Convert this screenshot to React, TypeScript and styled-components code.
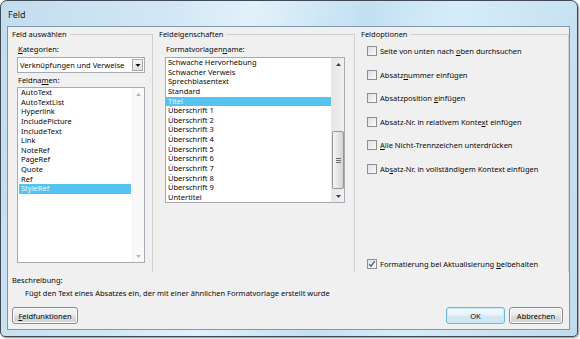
import React from 'react';
import styled, { createGlobalStyle } from 'styled-components';

const Global = createGlobalStyle`
  html, body { margin: 0; padding: 0; background: #ffffff; }
  body {
    font-family: "Noto Sans", "Open Sans", sans-serif;
    font-size: 7.5px;
    color: #080808;
  }
  #root { width: 580px; height: 339px; }
`;

const Window = styled.div`
  width: 578px;
  height: 337px;
  box-sizing: border-box;
  border: 1px solid #3f4a55;
  border-radius: 7px 7px 5px 5px;
  background:
    linear-gradient(100deg, #c3dcee 0%, #d3e8f6 28%, #e2f1fa 40%, #c2e0f2 58%, #d6edf9 72%, #bfdcef 100%);
  display: flex;
  flex-direction: column;
  box-shadow: 1px 1px 2px rgba(0, 0, 0, 0.45);
  overflow: hidden;
`;

const TitleBar = styled.div`
  height: 25px;
  flex: none;
  display: flex;
  align-items: center;
  padding-left: 7px;
  padding-top: 2px;
  box-sizing: border-box;
  font-size: 9px;
  color: #1b1b1b;
`;

const Client = styled.div`
  flex: 1;
  margin: 0 7px 6px 6px;
  border: 1px solid #7d97ad;
  background: #f0f0f0;
  display: flex;
  flex-direction: column;
`;

const GroupsRow = styled.div`
  display: flex;
  height: 244px;
  padding-top: 1px;
`;

const Group = styled.section<{ $w: number; $pl: number }>`
  width: ${(p) => p.$w}px;
  flex: none;
  display: flex;
  flex-direction: column;
  padding-left: ${(p) => p.$pl}px;
  box-sizing: border-box;
`;

const GroupHeader = styled.div`
  display: flex;
  height: 12px;
  line-height: 12px;
  flex: none;
`;

const GroupTitle = styled.span`
  padding-right: 3px;
  white-space: nowrap;
`;

const HeaderLine = styled.div`
  flex: 1;
  margin-top: 6px;
  border-top: 1px solid #d0d0d0;
  border-right: 1px solid #d0d0d0;
`;

const GroupBody = styled.div<{ $pl: number }>`
  flex: 1;
  display: flex;
  flex-direction: column;
  padding-left: ${(p) => p.$pl}px;
  border-right: 1px solid #d0d0d0;
`;

const FieldLabel = styled.div<{ $mt: number }>`
  line-height: 12px;
  margin-top: ${(p) => p.$mt}px;
  padding-left: 1px;
`;

const U = styled.span`
  text-decoration: underline;
  text-underline-offset: 1px;
`;

const Select = styled.div`
  margin-top: 2px;
  width: 128px;
  height: 16px;
  box-sizing: border-box;
  border: 1px solid #a4abb4;
  background: #ffffff;
  display: flex;
  align-items: center;
  padding-left: 2px;
  padding-right: 1px;
`;

const SelectText = styled.span`
  flex: 1;
  white-space: nowrap;
`;

const SelectButton = styled.div`
  width: 11px;
  height: 12px;
  box-sizing: border-box;
  border: 1px solid #a7a7a7;
  background: linear-gradient(#f6f6f6, #dedede);
  display: flex;
  align-items: center;
  justify-content: center;
`;

const ListBox = styled.div<{ $w: number; $h: number; $mt: number }>`
  width: ${(p) => p.$w}px;
  height: ${(p) => p.$h}px;
  box-sizing: border-box;
  border: 1px solid #a4abb4;
  background: #ffffff;
  display: flex;
  margin-top: ${(p) => p.$mt}px;
`;

const Rows = styled.div<{ $pad: number }>`
  flex: 1;
  padding: 0 ${(p) => p.$pad}px;
  overflow: hidden;
`;

const Row = styled.div<{ $sel?: boolean }>`
  height: 9.65px;
  line-height: 9.65px;
  padding-left: 2px;
  white-space: nowrap;
  background: ${(p) => (p.$sel ? '#56c2f0' : 'transparent')};
  color: ${(p) => (p.$sel ? '#eaf7ff' : '#080808')};
`;

const ScrollBar = styled.div<{ $disabled?: boolean }>`
  width: ${(p) => (p.$disabled ? 11 : 12)}px;
  flex: none;
  display: flex;
  flex-direction: column;
  background: ${(p) => (p.$disabled ? '#f9f9f9' : 'linear-gradient(90deg, #e6e6e6, #f1f1f1)')};
  border-left: 1px solid ${(p) => (p.$disabled ? '#f0f0f0' : '#e8e8e8')};
`;

const ScrollArrow = styled.div`
  height: 12px;
  flex: none;
  display: flex;
  align-items: center;
  justify-content: center;
`;

const ScrollTrack = styled.div`
  flex: 1;
  display: flex;
  flex-direction: column;
  padding-top: 61px;
`;

const Thumb = styled.div`
  height: 58px;
  box-sizing: border-box;
  border: 1px solid #979797;
  border-radius: 2px;
  background: linear-gradient(90deg, #f4f4f4, #e2e2e2 60%, #d3d3d3);
  display: flex;
  align-items: center;
  justify-content: center;
`;

const Options = styled.div`
  flex: 1;
  display: flex;
  flex-direction: column;
  padding-top: 5px;
  padding-bottom: 2px;
  gap: 11.5px;
`;

const OptionRow = styled.div<{ $bottom?: boolean }>`
  display: flex;
  align-items: center;
  height: 12px;
  line-height: 12px;
  white-space: nowrap;
  margin-top: ${(p) => (p.$bottom ? 'auto' : '0')};
`;

const Box = styled.div`
  width: 10px;
  height: 10px;
  box-sizing: border-box;
  border: 1px solid #8d8f91;
  background: linear-gradient(135deg, #dedede, #fbfbfb);
  margin-right: 3px;
  flex: none;
  display: flex;
  align-items: center;
  justify-content: center;
`;

const Description = styled.div`
  padding-left: 4px;
  margin-top: 2px;
  line-height: 12px;
`;

const DescText = styled.div`
  padding-left: 17px;
  margin-top: 1px;
  line-height: 12px;
  white-space: nowrap;
`;

const Footer = styled.div`
  display: flex;
  align-items: center;
  margin-top: 8px;
  padding: 0 6px 0 4px;
`;

const Button = styled.div<{ $w: number; $default?: boolean }>`
  width: ${(p) => p.$w}px;
  height: 17px;
  box-sizing: border-box;
  border: 1px solid ${(p) => (p.$default ? '#6fb8d6' : '#8b8b8b')};
  border-radius: 3px;
  background: ${(p) =>
    p.$default
      ? 'linear-gradient(#f4fafd 0%, #e6f2f9 48%, #d6e9f4 52%, #cbe3f1 100%)'
      : 'linear-gradient(#f3f3f3 0%, #ebebeb 48%, #dddddd 52%, #cfcfcf 100%)'};
  box-shadow: inset 0 0 0 1px ${(p) => (p.$default ? '#c8ecf8' : '#fbfbfb')};
  display: flex;
  align-items: center;
  justify-content: center;
  white-space: nowrap;
`;

const Spacer = styled.div`
  flex: 1;
`;

const ButtonGap = styled.div`
  width: 4px;
`;

const UpArrow = ({ c }: { c: string }) => (
  <svg width="5" height="3" viewBox="0 0 5 3">
    <path d="M0 3 L2.5 0 L5 3 Z" fill={c} />
  </svg>
);
const DownArrow = ({ c, w = 5 }: { c: string; w?: number }) => (
  <svg width={w} height="3" viewBox="0 0 5 3">
    <path d="M0 0 L5 0 L2.5 3 Z" fill={c} />
  </svg>
);

const Grip = () => (
  <svg width="5" height="5" viewBox="0 0 5 5">
    <path d="M0 0.5 H5 M0 2.5 H5 M0 4.5 H5" stroke="#6a6a6a" strokeWidth="1" />
  </svg>
);

const Check = () => (
  <svg width="8" height="8" viewBox="0 0 8 8">
    <path d="M1.2 4.2 L3.1 6.2 L6.8 1.2" stroke="#4b5f93" strokeWidth="1.4" fill="none" />
  </svg>
);

const fieldNames = [
  'AutoText',
  'AutoTextList',
  'Hyperlink',
  'IncludePicture',
  'IncludeText',
  'Link',
  'NoteRef',
  'PageRef',
  'Quote',
  'Ref',
  'StyleRef',
];

const styles = [
  'Schwache Hervorhebung',
  'Schwacher Verweis',
  'Sprechblasentext',
  'Standard',
  'Titel',
  'Überschrift 1',
  'Überschrift 2',
  'Überschrift 3',
  'Überschrift 4',
  'Überschrift 5',
  'Überschrift 6',
  'Überschrift 7',
  'Überschrift 8',
  'Überschrift 9',
  'Untertitel',
];

type Opt = { pre: string; key: string; post: string; checked?: boolean; bottom?: boolean };
const options: Opt[] = [
  { pre: 'Seite von unten nach ', key: 'o', post: 'ben durchsuchen' },
  { pre: 'Absatz', key: 'n', post: 'ummer einfügen' },
  { pre: 'Absatzposition ', key: 'e', post: 'infügen' },
  { pre: 'Absatz-Nr. in relativem Konte', key: 'x', post: 't einfügen' },
  { pre: '', key: 'A', post: 'lle Nicht-Trennzeichen unterdrücken' },
  { pre: 'Ab', key: 's', post: 'atz-Nr. in vollständigem Kontext einfügen' },
  { pre: 'Formatierung bei Aktualisierung ', key: 'b', post: 'eibehalten', checked: true, bottom: true },
];

export default function App() {
  return (
    <>
      <Global />
      <Window>
        <TitleBar>Feld</TitleBar>
        <Client>
          <GroupsRow>
            <Group $w={145} $pl={4}>
              <GroupHeader>
                <GroupTitle>Feld auswählen</GroupTitle>
                <HeaderLine />
              </GroupHeader>
              <GroupBody $pl={5}>
                <FieldLabel $mt={3}>
                  <U>K</U>ategorien:
                </FieldLabel>
                <Select>
                  <SelectText>Verknüpfungen und Verweise</SelectText>
                  <SelectButton>
                    <DownArrow c="#111" w={6} />
                  </SelectButton>
                </Select>
                <FieldLabel $mt={1}>
                  Feldna<U>m</U>en:
                </FieldLabel>
                <ListBox $w={128} $h={176} $mt={1}>
                  <Rows $pad={1}>
                    {fieldNames.map((n) => (
                      <Row key={n} $sel={n === 'StyleRef'}>
                        {n}
                      </Row>
                    ))}
                  </Rows>
                  <ScrollBar $disabled>
                    <ScrollArrow>
                      <UpArrow c="#b4b4b4" />
                    </ScrollArrow>
                    <Spacer />
                    <ScrollArrow>
                      <DownArrow c="#b4b4b4" />
                    </ScrollArrow>
                  </ScrollBar>
                </ListBox>
              </GroupBody>
            </Group>
            <Group $w={202} $pl={6}>
              <GroupHeader>
                <GroupTitle>Feldeigenschaften</GroupTitle>
                <HeaderLine />
              </GroupHeader>
              <GroupBody $pl={6}>
                <FieldLabel $mt={3}>
                  Formatvorlagen<U>n</U>ame:
                </FieldLabel>
                <ListBox $w={180} $h={146} $mt={2}>
                  <Rows $pad={0}>
                    {styles.map((n) => (
                      <Row key={n} $sel={n === 'Titel'}>
                        {n}
                      </Row>
                    ))}
                  </Rows>
                  <ScrollBar>
                    <ScrollArrow>
                      <UpArrow c="#3c3c3c" />
                    </ScrollArrow>
                    <ScrollTrack>
                      <Thumb>
                        <Grip />
                      </Thumb>
                    </ScrollTrack>
                    <ScrollArrow>
                      <DownArrow c="#3c3c3c" />
                    </ScrollArrow>
                  </ScrollBar>
                </ListBox>
              </GroupBody>
            </Group>
            <Group $w={214} $pl={6}>
              <GroupHeader>
                <GroupTitle>Feldoptionen</GroupTitle>
                <HeaderLine />
              </GroupHeader>
              <GroupBody $pl={6}>
                <Options>
                  {options.map((o) => (
                    <OptionRow key={o.pre + o.key} $bottom={o.bottom}>
                      <Box>{o.checked && <Check />}</Box>
                      <span>
                        {o.pre}
                        <U>{o.key}</U>
                        {o.post}
                      </span>
                    </OptionRow>
                  ))}
                </Options>
              </GroupBody>
            </Group>
          </GroupsRow>
          <Description>Beschreibung:</Description>
          <DescText>Fügt den Text eines Absatzes ein, der mit einer ähnlichen Formatvorlage erstellt wurde</DescText>
          <Footer>
            <Button $w={66}>
              <span>
                <U>F</U>eldfunktionen
              </span>
            </Button>
            <Spacer />
            <Button $w={59} $default>
              OK
            </Button>
            <ButtonGap />
            <Button $w={54}>Abbrechen</Button>
          </Footer>
        </Client>
      </Window>
    </>
  );
}
